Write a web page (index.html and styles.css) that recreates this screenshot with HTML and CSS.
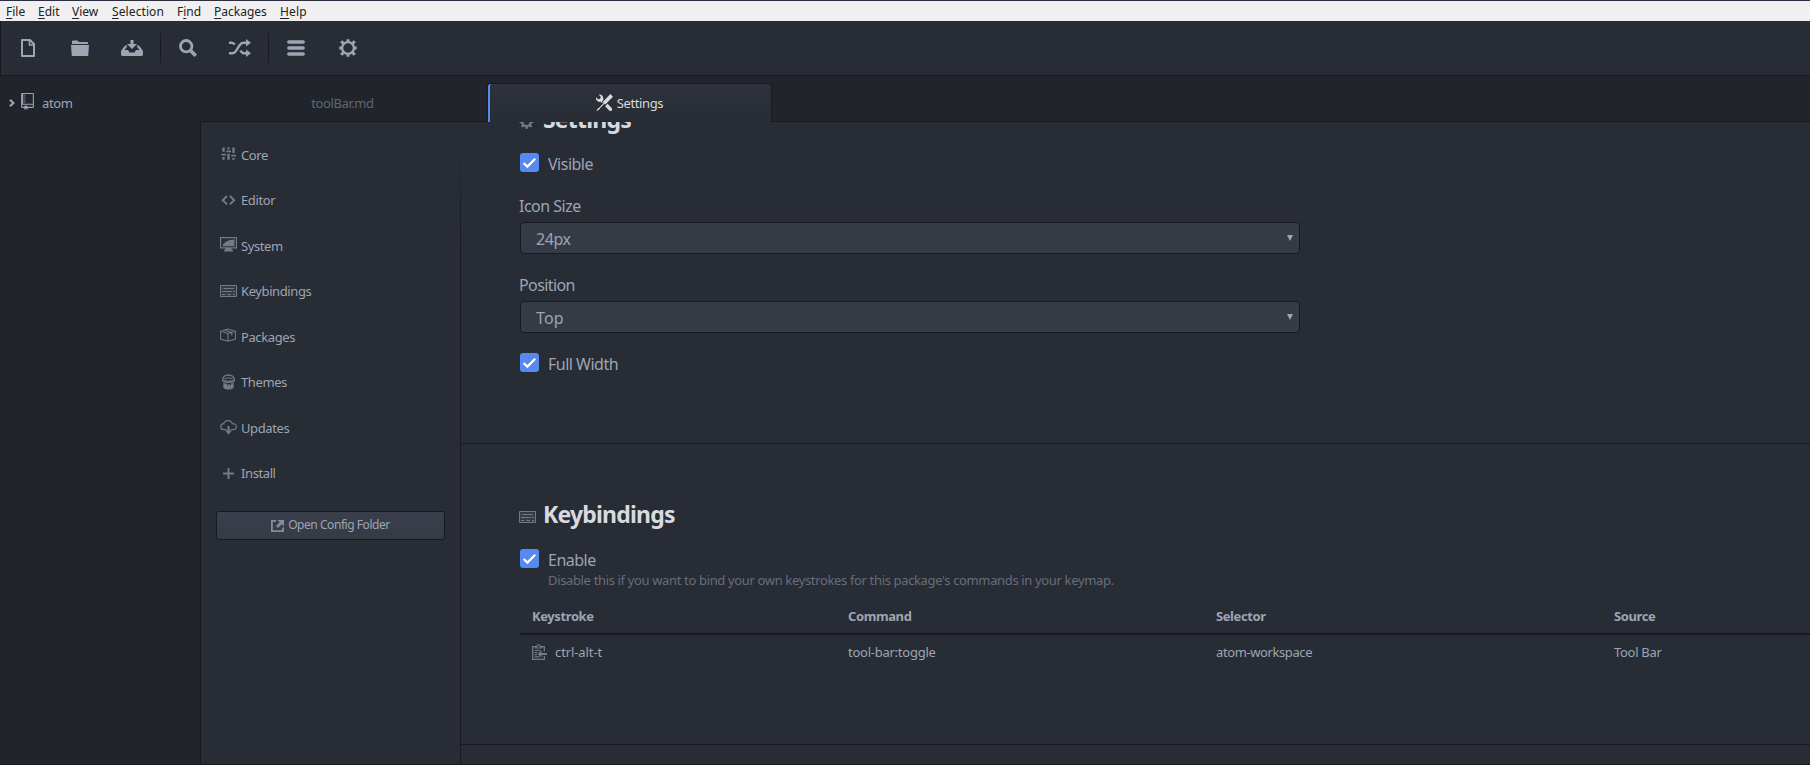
FILE: index.html
```html
<!DOCTYPE html>
<html lang="en">
<head>
<meta charset="utf-8">
<title>Settings</title>
<link rel="stylesheet" href="styles.css">
</head>
<body>
<svg class="defs" width="0" height="0">
  <symbol id="keyboard" viewBox="0 0 17 12"><path fill="none" stroke="currentColor" stroke-width="1" d="M.5.5h16v11H.5z"/><path stroke="currentColor" stroke-width="1" d="M2 3.500h1m1 0h10M2 6.500h10m1 0h2M2 9.500h3m2 0h4m2 0h2"/><path fill="currentColor" opacity=".2" d="M1 1h15v10H1z"/></symbol>
  <symbol id="gear" viewBox="0 0 14 16"><path fill="currentColor" fill-rule="evenodd" d="M14 8.77v-1.6l-1.94-.64-.45-1.09.88-1.84-1.13-1.13-1.81.91-1.09-.45-.69-1.92h-1.6l-.63 1.94-1.11.45-1.84-.88-1.13 1.13.91 1.81-.45 1.09L0 7.23v1.59l1.94.64.45 1.09-.88 1.84 1.13 1.13 1.81-.91 1.09.45.69 1.92h1.59l.63-1.94 1.11-.45 1.84.88 1.13-1.13-.92-1.81.47-1.09L14 8.75zM7 11a3 3 0 1 1 0-6 3 3 0 0 1 0 6z"/></symbol>
  <symbol id="check" viewBox="0 0 19 19"><path fill="none" stroke="#fff" stroke-width="2.2" d="M3.600 10l3.800 3.600 7.800-7.800"/></symbol>
</svg>

<header class="menubar">
  <span class="m-file"><u>F</u>ile</span><span class="m-edit"><u>E</u>dit</span><span class="m-view"><u>V</u>iew</span><span class="m-selection"><u>S</u>election</span><span class="m-find">F<u>i</u>nd</span><span class="m-packages"><u>P</u>ackages</span><span class="m-help"><u>H</u>elp</span>
</header>

<div class="toolbar">
  <div class="tool"><svg width="14" height="18" viewBox="0 0 14 18"><path fill="none" stroke="currentColor" stroke-width="2" stroke-linejoin="round" d="M1 1h8l4 4v12H1z"/><path fill="none" stroke="currentColor" stroke-width="1.6" d="M8.500 1v5H13"/></svg></div>
  <div class="tool"><svg width="18" height="16" viewBox="0 0 18 16"><path fill="currentColor" d="M1 4V1.500Q1 .5 2 .5h4.500L8 2h8q1 0 1 1v1zM0 5h18l-.7 10q-.1 1-1 1H1.700q-.9 0-1-1z"/></svg></div>
  <div class="tool"><svg width="22" height="16" viewBox="0 0 22 16"><path fill="currentColor" d="M9.500 0h3v4H16l-5 5-5-5h3.500zM5 5L2.800 7 0 11v3.500Q0 16 1.500 16h19q1.500 0 1.500-1.500V11l-2.800-4L17 5l-1.300 1.300L18.500 10H15l-1.500 2.500h-5L7 10H3.500l2.800-3.700z"/></svg></div>
  <div class="divider"></div>
  <div class="tool"><svg width="18" height="18" viewBox="0 0 18 18"><circle cx="7.200" cy="7.200" r="5.700" fill="none" stroke="currentColor" stroke-width="2.800"/><path stroke="currentColor" stroke-width="3.600" d="M11.300 11.300l5.400 5.400"/></svg></div>
  <div class="tool"><svg width="22" height="18" viewBox="0 0 22 18"><path fill="none" stroke="currentColor" stroke-width="2.400" d="M0 3.700h2.500q2 0 3.300 2M0 14.300h3q2.500 0 4-2.500l3.500-5.500q1.700-2.600 4-2.600H18M11.500 11.500q1.300 2.800 3.500 2.800H18"/><path fill="currentColor" d="M17 0l5 3.700-5 3.700zM17 10.600l5 3.700-5 3.700z"/></svg></div>
  <div class="divider"></div>
  <div class="tool"><svg width="18" height="16" viewBox="0 0 18 16"><path stroke="currentColor" stroke-width="3.400" stroke-linecap="round" d="M1.800 2h14.400M1.800 8h14.400M1.800 14h14.400"/></svg></div>
  <div class="tool"><svg width="18" height="18" viewBox="0 0 18 18"><circle cx="9" cy="9" r="5.900" fill="none" stroke="currentColor" stroke-width="2.300"/><path stroke="currentColor" stroke-width="3" d="M9 .2v3M9 14.800v3M.2 9h3M14.800 9h3M2.200 2.200l2.200 2.200M13.600 13.600l2.200 2.200M2.200 15.800l2.200-2.200M13.600 4.400l2.200-2.200"/></svg></div>
</div>

<div class="workspace">
  <aside class="tree">
    <svg class="chevron" width="6" height="8" viewBox="0 0 6 8"><path fill="none" stroke="currentColor" stroke-width="2.200" d="M1 .8L4.300 4 1 7.200"/></svg>
    <svg class="repo" width="13" height="17" viewBox="0 0 12 16"><path fill="currentColor" d="M4 9H3V8h1v1zm0-3H3v1h1V6zm0-2H3v1h1V4zm0-2H3v1h1V2zm8-1v12c0 .55-.45 1-1 1H6v2l-1.500-1.500L3 16v-2H1c-.55 0-1-.45-1-1V1c0-.55.45-1 1-1h10c.55 0 1 .45 1 1zm-1 10H1v2h2v-1h3v1h5v-2zm0-10H2v9h9V1z"/></svg>
    <span>atom</span>
  </aside>

  <div class="pane">
    <div class="tabs">
      <div class="tab"><span class="t-md">toolBar.md</span></div>
      <div class="tab active">
        <svg width="17" height="17" viewBox="0 0 16 16"><path fill="currentColor" d="M4.480 7.270c.26.26 1.280 1.330 1.280 1.330l.56-.58-.88-.91 1.690-1.800s-.76-.74-.43-.45c.32-1.190.03-2.510-.87-3.440C4.930.5 3.660.2 2.520.51l1.930 2-.51 1.960-1.890.52-1.930-1.990C-.19 4.170.1 5.480 1 6.400c.94.98 2.290 1.260 3.480.87zm6.440 1.940l-2.330 2.300 3.840 3.980c.31.33.73.49 1.140.49.41 0 .82-.16 1.140-.49.63-.65.63-1.700 0-2.350l-3.790-3.930zM16 2.530L13.550 0 6.330 7.460l.88.91-4.310 4.460-.99.53-1.390 2.270.35.37 2.200-1.440.51-1.020L7.900 9.080l.88.91L16 2.530z"/></svg>
        <span class="t-settings">Settings</span>
      </div>
      <div class="tab-fill"></div>
    </div>

    <div class="settings">
      <nav class="nav">
        <a class="item"><svg width="17" height="16" viewBox="0 0 17 16"><path fill="currentColor" d="M2.300 1.500h2.400v4.300H2.300zM1.300 7.700h4.700v1.800H1.300zM2.300 11h2.400v2.700H2.300zM7.300 1.500h2.400v1.800H7.300zM6.300 4.500h4.700v1.800H6.300zM7.300 7.700h2.400v6H7.300zM12.300 1.500h2.400v5.400h-2.400zM11.300 8.700H16v1.800h-4.700zM12.300 11.900h2.400v1.800h-2.400z"/></svg><span class="n-core">Core</span></a>
        <a class="item"><svg width="17" height="16" viewBox="0 0 17 16"><path fill="none" stroke="currentColor" stroke-width="2" d="M7 4L2.800 8.200 7 12.400M10 4l4.200 4.200L10 12.400"/></svg><span class="n-editor">Editor</span></a>
        <a class="item"><svg width="17" height="16" viewBox="0 0 17 16"><path fill="none" stroke="currentColor" stroke-width="1.200" d="M.6.6h15.800v10.200H.6z"/><path fill="currentColor" d="M2.500 9.300Q4 3 14.500 2.500v6.800zM5.500 11h6v1.300l1.500 1v1.200H4v-1.200l1.500-1z"/></svg><span class="n-system">System</span></a>
        <a class="item"><svg width="17" height="12"><use href="#keyboard"/></svg><span class="n-keybindings">Keybindings</span></a>
        <a class="item"><svg width="17" height="16" viewBox="0 0 17 16"><path fill="none" stroke="currentColor" stroke-width="1.100" d="M.6 3.300L8 1l7.400 2.300v7.800L8 13.200.6 11.100zM.6 3.300L8 5.500l7.400-2.200M8 5.500v7.700M4.500 2.200l7.300 2.200v3"/></svg><span class="n-packages">Packages</span></a>
        <a class="item"><svg width="17" height="16" viewBox="0 0 17 16"><path fill="none" stroke="currentColor" stroke-width="1.300" d="M2.600 6.800C2 2.800 5 1 8.500 1s6.500 1.800 5.900 5.800"/><ellipse cx="8.500" cy="5.600" rx="4.800" ry="1.600" fill="none" stroke="currentColor"/><path fill="currentColor" d="M2.500 6.200Q8.500 9 14.500 6.200V8q-6 2-12 0zM3.300 9q2.700.8 4 .8v1.700h1.200V9.900h1.300v1.300H11V9.600l2.700-.6v4.500Q12.500 15.500 8.500 15.500t-5.200-2z"/></svg><span class="n-themes">Themes</span></a>
        <a class="item"><svg width="17" height="16" viewBox="0 0 17 16"><path fill="none" stroke="currentColor" stroke-width="1.200" d="M6.500 10.600H4C1.800 10.600.7 9.400.7 7.700S2 4.800 3.700 4.700C4.300 2.300 6 1.600 8 1.600s3.800 1.100 4.200 3.100c2.500 0 4.100 1 4.100 3s-1.500 2.900-3.300 2.900h-2.500"/><path fill="currentColor" d="M7.500 7h2v4.500H12l-3.500 4-3.500-4h2.500z"/></svg><span class="n-updates">Updates</span></a>
        <a class="item"><svg width="17" height="16" viewBox="0 0 17 16"><path stroke="currentColor" stroke-width="2" d="M3 8.500h11M8.500 3v11"/></svg><span class="n-install">Install</span></a>
        <button class="config"><svg width="13" height="12" viewBox="0 0 13 12"><path fill="none" stroke="currentColor" stroke-width="1.800" d="M5.200.9H.9v10.200h11.200V7.500"/><path fill="currentColor" d="M6.500 0H13v6.200l-2.200-2L7 8 5 6l3.700-3.800z"/></svg><span>Open Config Folder</span></button>
      </nav>

      <main class="main">
        <section class="section options">
          <h2 class="heading h-settings"><svg width="15" height="16"><use href="#gear"/></svg><span>Settings</span></h2>
          <div class="check c-visible"><svg class="box" width="19" height="19"><use href="#check"/></svg><span>Visible</span></div>
          <div class="label l-icon"><span>Icon Size</span></div>
          <div class="select"><span class="s-24">24px</span><i></i></div>
          <div class="label l-position"><span>Position</span></div>
          <div class="select"><span class="s-top">Top</span><i></i></div>
          <div class="check c-full"><svg class="box" width="19" height="19"><use href="#check"/></svg><span>Full Width</span></div>
        </section>

        <section class="section keys">
          <h2 class="heading h-keys"><svg width="17" height="12"><use href="#keyboard"/></svg><span>Keybindings</span></h2>
          <div class="check c-enable"><svg class="box" width="19" height="19"><use href="#check"/></svg><span>Enable</span></div>
          <p class="desc"><span>Disable this if you want to bind your own keystrokes for this package's commands in your keymap.</span></p>
          <div class="row head"><span>Keystroke</span><span>Command</span><span>Selector</span><span>Source</span></div>
          <div class="row">
            <span class="stroke"><svg width="15" height="16" viewBox="0 0 15 16"><path fill="none" stroke="currentColor" stroke-width="1.300" d="M3.500 2.600H.7v12.700h11.600V12M12.300 7.500V2.600H9.500"/><path fill="none" stroke="currentColor" stroke-width="1.200" d="M3.500 4V2.600h1.300q.2-2 1.700-2t1.700 2h1.300V4zM2.500 6.500h6M2.500 8.500h3M2.500 10.700h2.500M2.500 12.900h5"/><path fill="currentColor" d="M5.500 10L9.500 6.500V9H15v2H9.500v2.500z"/></svg><span>ctrl-alt-t</span></span>
            <span class="r-cmd">tool-bar:toggle</span><span class="r-sel">atom-workspace</span><span class="r-src">Tool Bar</span>
          </div>
        </section>
      </main>
    </div>
  </div>
</div>
<footer class="bottom"></footer>
</body>
</html>
```
FILE: styles.css
```css
* { box-sizing: border-box; }
html, body { height: 100%; }
body {
  margin: 0;
  display: flex;
  flex-direction: column;
  overflow: hidden;
  background: #21252b;
  color: #9da5b4;
  font: 13px/20px "Noto Sans", sans-serif;
  letter-spacing: -0.4px;
  white-space: nowrap;
}
.defs { position: absolute; }
svg { flex: none; }

.menubar {
  flex: none;
  height: 21px;
  display: flex;
  border-top: 1px solid #2b2f3e;
  background: #f0f0f0;
  color: #222;
  padding-left: 6px;
  font-size: 12px;
  line-height: 21px;
  letter-spacing: 0;
}
.menubar u { text-underline-offset: 2px; text-decoration-thickness: 1px; }
.m-file { width: 32px; }
.m-edit { width: 34px; }
.m-view { width: 40px; }
.m-selection { width: 65px; letter-spacing: 0.1px; }
.m-find { width: 37px; }
.m-packages { width: 66px; }
.m-help { letter-spacing: 0.2px; }

.toolbar {
  flex: none;
  height: 55px;
  display: flex;
  align-items: center;
  padding: 0 0 1px 2px;
  background: #282c34;
  border-left: 1px solid #181a1f;
  border-bottom: 1px solid #181a1f;
}
.tool { width: 52px; display: flex; justify-content: center; padding-right: 2px; }
.divider { width: 1px; height: 40px; margin: 0 2px 0 1px; background: linear-gradient(#282c34, #181a1f 30%, #181a1f 70%, #282c34); }

.workspace { flex: 1; min-height: 0; display: flex; }
.tree {
  width: 200px;
  height: 54px;
  display: flex;
  align-items: center;
  padding-left: 9px;
}
.chevron { margin-right: 7px; }
.repo { margin: -3px 8px 0 -1px; }

.pane { flex: 1; min-width: 0; display: flex; flex-direction: column; border-left: 1px solid #181a1f; }
.tabs { flex: none; height: 46px; display: flex; padding-top: 7px; background: #21252b; margin-left: -1px; }
.tab {
  width: 287px;
  display: flex;
  align-items: center;
  justify-content: center;
  padding-right: 2px;
  color: #5f6672;
  border-bottom: 1px solid #181a1f;
}
.tab.active {
  width: 285px;
  padding-right: 0;
  color: #d7dae0;
  gap: 4px;
  border: 1px solid #181a1f;
  border-bottom: 0;
  border-radius: 3px 3px 0 0;
  background: linear-gradient(#2e323a, #282c34);
  box-shadow: inset 2px 0 #568af2;
}
.t-md { padding-top: 1px; }
.tab.active svg { margin-top: -1px; }
.tab.active span { margin-top: -1px; }
.tab-fill { flex: 1; border-bottom: 1px solid #181a1f; }

.settings { flex: 1; min-height: 0; display: flex; background: #282c34; }
.nav {
  width: 260px;
  padding: 10px 15px 0;
  border-right: 1px solid;
  border-image: linear-gradient(#282c34 3%, #181a1f 20%) 1;
}
.item { display: flex; align-items: center; height: 45.5px; padding-left: 4px; gap: 4px; }
.item svg { color: #737a87; margin-top: -1px; }
.config {
  display: flex;
  align-items: center;
  justify-content: center;
  gap: 4px;
  width: 229px;
  height: 29px;
  margin: 15px 0 0;
  padding: 0 0 2px;
  border: 1px solid #181a1f;
  border-radius: 3px;
  background: linear-gradient(#3a3f4b, #353b45);
  color: #9da5b4;
  font: inherit;
  font-size: 12px;
  letter-spacing: -0.45px;
}
.config svg { color: #858d9a; margin-top: 2px; }

.main { flex: 1; min-width: 0; overflow: hidden; }
.section { padding-left: 59px; border-bottom: 1px solid #181a1f; }
.options { height: 322px; overflow: hidden; }
.keys { height: 301px; padding-top: 54px; }
.heading {
  display: flex;
  align-items: center;
  margin: 0;
  height: 32px;
  font-size: 23px;
  line-height: 32px;
  font-weight: 700;
  letter-spacing: -0.8px;
  color: #d7dae0;
}
.heading svg { color: #737a87; margin: 5px 7px 0 -1px; }
.h-settings { margin-top: -19px; }
.h-settings svg { margin-right: 9px; }
.check { display: flex; gap: 9px; font-size: 16px; line-height: 24px; height: 24px; letter-spacing: -0.5px; }
.box { background: #568af2; border-radius: 3px; margin-top: 1px; }
.c-visible { margin-top: 17px; }
.label { font-size: 16px; line-height: 24px; height: 24px; letter-spacing: -0.5px; margin: 18px 0 4px -1px; }
.label.l-position { margin-top: 19px; letter-spacing: -0.6px; }
.select {
  width: 780px;
  height: 32px;
  display: flex;
  justify-content: space-between;
  padding: 1px 6px 0 15px;
  border: 1px solid #181a1f;
  border-radius: 4px;
  background: #353b45;
  font-size: 16px;
  line-height: 30px;
  letter-spacing: -0.4px;
}
.select i { border: solid transparent; border-width: 6px 3px 0; border-top-color: #9da5b4; height: 6px; margin-top: 11px; }
.s-top { letter-spacing: 0.1px; }
.c-full { margin-top: 19px; }
.c-enable { margin-top: 18px; }
.desc { margin: -2px 0 0 28px; color: #676e7b; letter-spacing: -0.35px; }
.row { display: grid; grid-template-columns: 316px 368px 398px 1fr; padding: 7px 0 7px 12px; }
.head { margin-top: 9px; font-weight: 700; border-bottom: 2px solid #181a1f; }
.stroke { display: flex; gap: 8px; letter-spacing: -0.1px; }
.stroke svg { color: #737a87; margin-top: 2px; }
.r-cmd { letter-spacing: -0.25px; }
.r-src { letter-spacing: -0.3px; }

.bottom { flex: none; height: 1px; background: #181a1f; }
```
